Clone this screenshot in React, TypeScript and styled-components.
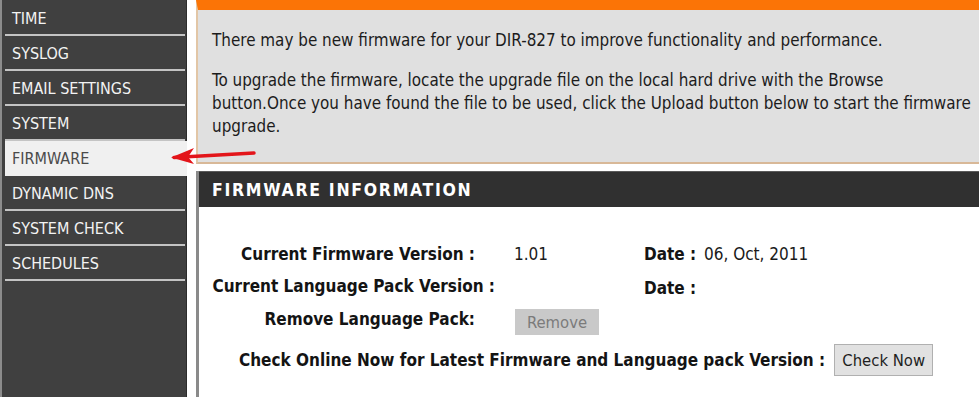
import React from "react";
import styled, { createGlobalStyle } from "styled-components";

const Global = createGlobalStyle`
  html, body { margin: 0; padding: 0; background: #ffffff; }
  body { width: 979px; height: 397px; overflow: hidden; }
  #root { height: 397px; }
  * { box-sizing: border-box; }
`;

const FONT = `"DejaVu Sans Condensed", "DejaVu Sans", sans-serif`;

const Page = styled.div`
  position: relative;
  display: flex;
  height: 397px;
  width: 979px;
  overflow: hidden;
  font-family: ${FONT};
  background: #ffffff;
`;

const Sidebar = styled.nav`
  flex: 0 0 187px;
  height: 100%;
  background: #404040;
  border-left: 2px solid #8c8c8c;
  border-right: 1px solid #2c2c2c;
  padding: 1px 1px 0 3px;
  display: flex;
  flex-direction: column;
`;

const NavItem = styled.div<{ $active?: boolean }>`
  height: 35px;
  flex: 0 0 35px;
  display: flex;
  align-items: center;
  padding: 1px 0 0 7px;
  font-size: 16px;
  text-transform: uppercase;
  color: ${(p) => (p.$active ? "#4a4a4a" : "#f3f3f3")};
  background: ${(p) => (p.$active ? "#f0f0f0" : "transparent")};
  border-bottom: 2px solid ${(p) => (p.$active ? "#f0f0f0" : "#c4c4c4")};
  margin-right: ${(p) => (p.$active ? "-2px" : "0")};
`;

const Gutter = styled.div`
  flex: 0 0 9px;
`;

const Main = styled.main`
  flex: 1 1 auto;
  min-width: 0;
  display: flex;
  flex-direction: column;
  gap: 7px;
`;

const IntroBox = styled.section`
  height: 164px;
  flex: 0 0 164px;
  background: #e0e0e0;
  border-top: 10px solid #fb7406;
  border-left: 2px solid #e2c6a6;
  border-bottom: 2px solid #d8b898;
  padding: 19px 1px 0 14px;
  color: #1c1c1c;
  font-size: 16.9px;
  line-height: 23px;
`;

const Para = styled.p`
  margin: 0 0 17px 0;
`;

const InfoSection = styled.section`
  flex: 1 1 auto;
  border-left: 3px solid #8a8a8a;
  display: flex;
  flex-direction: column;
`;

const SectionHeader = styled.h2`
  margin: 0;
  height: 36px;
  background: #303030;
  border-top: 1px solid #5a5a5a;
  color: #ffffff;
  font-size: 17.5px;
  font-weight: bold;
  letter-spacing: 1.7px;
  display: flex;
  align-items: center;
  padding: 1px 0 0 13px;
`;

const InfoBody = styled.div`
  padding-top: 31px;
  display: flex;
  flex-direction: column;
`;

const InfoGrid = styled.div`
  display: grid;
  grid-template-columns: 276px 169px 60px auto;
  column-gap: 0;
  align-items: center;
`;

const Label = styled.div<{ $h: number; $overhang?: number }>`
  height: ${(p) => p.$h}px;
  display: flex;
  align-items: center;
  justify-content: flex-end;
  white-space: nowrap;
  font-weight: bold;
  font-size: 17px;
  color: #141414;
  margin-right: ${(p) => -(p.$overhang || 0)}px;
`;

const Value = styled.div`
  padding-left: 39px;
  font-size: 17px;
  color: #1a1a1a;
  white-space: nowrap;
`;

const DateLabel = styled.div<{ $drop?: number }>`
  font-weight: bold;
  font-size: 17px;
  color: #141414;
  white-space: nowrap;
  margin-top: ${(p) => p.$drop || 0}px;
`;

const DateValue = styled.div`
  font-size: 17px;
  color: #1a1a1a;
  white-space: nowrap;
`;

const ButtonCell = styled.div`
  padding-left: 40px;
  display: flex;
  align-items: center;
`;

const DisabledButton = styled.button`
  width: 84px;
  height: 26px;
  border: none;
  background: #c9c9c9;
  color: #7b7b7b;
  font-family: ${FONT};
  font-size: 16.5px;
  padding: 0;
  margin-top: 6px;
`;

const CheckRow = styled.div`
  display: flex;
  align-items: center;
  margin-top: 8px;
  padding-left: 40px;
  gap: 9px;
`;

const CheckLabel = styled.div`
  font-weight: bold;
  font-size: 17px;
  color: #141414;
  white-space: nowrap;
`;

const CheckButton = styled.button`
  width: 99px;
  height: 32px;
  border: 1px solid #b0b0b0;
  background: #e1e1e1;
  color: #1e1e1e;
  font-family: ${FONT};
  font-size: 16.5px;
  padding: 0;
`;

const Arrow = styled.svg`
  position: absolute;
  left: 168px;
  top: 144px;
  width: 92px;
  height: 24px;
  overflow: visible;
`;

const navItems = [
  "Time",
  "Syslog",
  "Email Settings",
  "System",
  "Firmware",
  "Dynamic DNS",
  "System Check",
  "Schedules",
];

export default function App() {
  return (
    <>
      <Global />
      <Page>
        <Sidebar>
          {navItems.map((n) => (
            <NavItem key={n} $active={n === "Firmware"}>
              {n}
            </NavItem>
          ))}
        </Sidebar>
        <Gutter />
        <Main>
          <IntroBox>
            <Para>
              There may be new firmware for your DIR-827 to improve functionality and performance.
            </Para>
            <Para>
              To upgrade the firmware, locate the upgrade file on the local hard drive with the Browse
              button.Once you have found the file to be used, click the Upload button below to start
              the firmware upgrade.
            </Para>
          </IntroBox>
          <InfoSection>
            <SectionHeader>FIRMWARE INFORMATION</SectionHeader>
            <InfoBody>
              <InfoGrid>
                <Label $h={32}>Current Firmware Version :</Label>
                <Value>1.01</Value>
                <DateLabel>Date :</DateLabel>
                <DateValue>06, Oct, 2011</DateValue>

                <Label $h={32} $overhang={20}>Current Language Pack Version :</Label>
                <Value />
                <DateLabel $drop={3}>Date :</DateLabel>
                <DateValue />

                <Label $h={34}>Remove Language Pack:</Label>
                <ButtonCell>
                  <DisabledButton disabled>Remove</DisabledButton>
                </ButtonCell>
                <div />
                <div />
              </InfoGrid>
              <CheckRow>
                <CheckLabel>Check Online Now for Latest Firmware and Language pack Version :</CheckLabel>
                <CheckButton>Check Now</CheckButton>
              </CheckRow>
            </InfoBody>
          </InfoSection>
        </Main>
        <Arrow viewBox="0 0 92 24">
          <g stroke="#e3151a" strokeWidth="3.5" strokeLinecap="round" fill="none">
            <line x1="86" y1="9" x2="6" y2="13.5" />
          </g>
          <polygon points="3,13.5 26,4 20,13 26,20" fill="#e3151a" />
        </Arrow>
      </Page>
    </>
  );
}
